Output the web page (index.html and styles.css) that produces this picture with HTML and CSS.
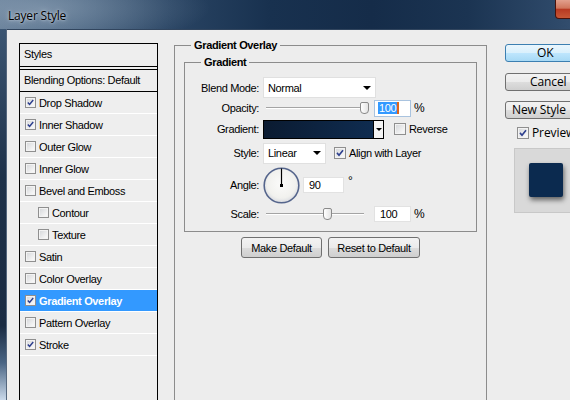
FILE: index.html
```html
<!DOCTYPE html>
<html>
<head>
<meta charset="utf-8">
<title>Layer Style</title>
<link rel="stylesheet" href="styles.css">
</head>
<body>
<div class="window">
  <div class="titlebar">
    <span class="title">Layer Style</span>
    <span class="close"></span>
  </div>
  <div class="frame">
    <div class="edge"></div>
    <div class="content">
      <div class="styles-list">
        <div class="list-head">Styles</div>
        <div class="list-blend">Blending Options: Default</div>
        <div class="list-item"><span class="cb"><svg viewBox="0 0 11 11"><path d="M2.2 5.4 L4.4 7.9 L8.8 2.4" /></svg></span>Drop Shadow</div>
        <div class="list-item"><span class="cb"><svg viewBox="0 0 11 11"><path d="M2.2 5.4 L4.4 7.9 L8.8 2.4" /></svg></span>Inner Shadow</div>
        <div class="list-item"><span class="cb"></span>Outer Glow</div>
        <div class="list-item"><span class="cb"></span>Inner Glow</div>
        <div class="list-item"><span class="cb"></span>Bevel and Emboss</div>
        <div class="list-item sub"><span class="cb"></span>Contour</div>
        <div class="list-item sub"><span class="cb"></span>Texture</div>
        <div class="list-item"><span class="cb"></span>Satin</div>
        <div class="list-item"><span class="cb"></span>Color Overlay</div>
        <div class="list-item active"><span class="cb"><svg viewBox="0 0 11 11"><path d="M2.2 5.4 L4.4 7.9 L8.8 2.4" /></svg></span>Gradient Overlay</div>
        <div class="list-item"><span class="cb"></span>Pattern Overlay</div>
        <div class="list-item"><span class="cb"><svg viewBox="0 0 11 11"><path d="M2.2 5.4 L4.4 7.9 L8.8 2.4" /></svg></span>Stroke</div>
      </div>

      <fieldset class="group outer">
        <legend>Gradient Overlay</legend>
        <fieldset class="group inner">
          <legend>Gradient</legend>
          <div class="rows">
            <div class="row r-blend">
              <span class="label">Blend Mode:</span>
              <div class="select sel-blend"><span class="sel-text">Normal</span><span class="arrow"></span></div>
            </div>
            <div class="row r-opacity">
              <span class="label">Opacity:</span>
              <div class="slider"><div class="track"></div><div class="thumb" style="left:97px"></div></div>
              <div class="field focused"><span class="sel">100</span><span class="caret"></span></div>
              <span class="unit">%</span>
            </div>
            <div class="row r-gradient">
              <span class="label">Gradient:</span>
              <div class="swatch"><div class="swatch-fill"></div><div class="swatch-arrow"><span class="arrow"></span></div></div>
              <span class="cb big"></span>
              <span class="cb-text">Reverse</span>
            </div>
            <div class="row r-style">
              <span class="label">Style:</span>
              <div class="select sel-style"><span class="sel-text">Linear</span><span class="arrow"></span></div>
              <span class="cb big align"><svg viewBox="0 0 11 11"><path d="M2.2 5.4 L4.4 7.9 L8.8 2.4" /></svg></span>
              <span class="cb-text">Align with Layer</span>
            </div>
            <div class="row r-angle">
              <span class="label">Angle:</span>
              <svg class="dial" width="37" height="37" viewBox="0 0 37 37">
                <defs>
                  <radialGradient id="dialfill" cx="50%" cy="45%" r="55%">
                    <stop offset="0%" stop-color="#fbfbfa"/>
                    <stop offset="75%" stop-color="#f1f1ee"/>
                    <stop offset="100%" stop-color="#d9dbe0"/>
                  </radialGradient>
                </defs>
                <circle cx="18.5" cy="18.5" r="17.3" fill="url(#dialfill)" stroke="#55658c" stroke-width="1.6"/>
                <line x1="18.5" y1="18.5" x2="18.5" y2="1.5" stroke="#000" stroke-width="1.2"/>
                <rect x="17" y="17" width="3" height="3" fill="#000"/>
              </svg>
              <div class="field angle-field">90</div>
              <span class="deg">°</span>
            </div>
            <div class="row r-scale">
              <span class="label">Scale:</span>
              <div class="slider"><div class="track"></div><div class="thumb" style="left:60px"></div></div>
              <div class="field">100</div>
              <span class="unit">%</span>
            </div>
          </div>
        </fieldset>
        <div class="btn-row">
          <div class="btn btn-make">Make Default</div>
          <div class="btn btn-reset">Reset to Default</div>
        </div>
      </fieldset>

      <div class="side">
        <div class="sbtn ok">OK</div>
        <div class="sbtn cancel">Cancel</div>
        <div class="sbtn newstyle">New Style</div>
        <div class="preview-row"><span class="cb big"><svg viewBox="0 0 11 11"><path d="M2.2 5.4 L4.4 7.9 L8.8 2.4" /></svg></span><span class="preview-text">Preview</span></div>
        <div class="preview-box"><div class="preview-square"></div></div>
      </div>
    </div>
  </div>
</div>
</body>
</html>
```

FILE: styles.css
```css
html, body {
  margin: 0;
  padding: 0;
}

body {
  width: 570px;
  height: 400px;
  overflow: hidden;
  background: #ededed;
  font-family: "Liberation Sans", Arial, sans-serif;
  font-size: 11px;
  letter-spacing: -0.35px;
  color: #000;
}

.window {
  width: 600px;
  height: 400px;
  display: flex;
  flex-direction: column;
}

/* ---------- title bar ---------- */
.titlebar {
  height: 29px;
  flex: none;
  display: flex;
  align-items: flex-start;
  background:
    radial-gradient(ellipse 170px 40px at 40px 8px, rgba(160,178,196,0.5), rgba(160,178,196,0) 100%),
    linear-gradient(90deg, #5f7893 0%, #4a6582 12%, #2a4564 28%, #18314f 45%, #152c49 62%, #1b3452 78%, #2d4868 92%, #3a5575 100%);
}

.title {
  font-family: "Open Sans", "Noto Sans", sans-serif;
  font-size: 12px;
  letter-spacing: -0.2px;
  line-height: 17px;
  padding: 7px 0 0 8px;
  color: #000;
  text-shadow: 0 0 5px rgba(220,230,240,0.9), 0 0 2px rgba(220,230,240,0.7);
}

.close {
  margin-left: auto;
  width: 43px;
  height: 18px;
  border: 1px solid #4a120a;
  border-top: none;
  border-radius: 0 0 4px 4px;
  background: linear-gradient(#e2a08d, #d0765c 45%, #b83a22 52%, #c85736 100%);
}

/* ---------- frame ---------- */
.frame {
  flex: 1;
  display: flex;
  min-height: 0;
}

.edge {
  width: 6px;
  flex: none;
  border-right: 1px solid #55677e;
  background: linear-gradient(#3b5572, #1e3149 40%, #1a2b42 80%, #4a6584 90%, #cad9ea 100%);
}

.content {
  flex: 1;
  display: flex;
  align-items: flex-start;
  border-top: 1px solid #31455e;
  background: #ededed;
  padding-left: 12px;
  min-width: 0;
}

/* ---------- styles list ---------- */
.styles-list {
  width: 139px;
  height: 400px;
  flex: none;
  box-sizing: border-box;
  margin-top: 13px;
  border: 1px solid #000;
  background: #eeeeee;
}

.list-head {
  height: 22px;
  line-height: 21px;
  padding-left: 4px;
  border-bottom: 1px solid #000;
}

.list-blend {
  height: 21px;
  line-height: 21px;
  padding-left: 4px;
  margin-top: 2px;
  border-top: 1px solid #000;
  border-bottom: 1px solid #000;
}

.list-item {
  height: 21px;
  display: flex;
  align-items: center;
  padding-left: 5px;
  border-bottom: 1px solid #ffffff;
}

.list-item.sub {
  padding-left: 18px;
}

.list-item.active {
  background: #3399ff;
  color: #fff;
  font-weight: bold;
}

/* ---------- checkboxes ---------- */
.cb {
  width: 11px;
  height: 11px;
  flex: none;
  box-sizing: border-box;
  border: 1px solid #8f8f8f;
  background: linear-gradient(135deg, #d3d5d8, #f6f6f6 80%);
  box-shadow: inset 0 0 0 1px #f3f3f3;
  margin-right: 3px;
  display: flex;
}

.cb svg {
  width: 100%;
  height: 100%;
}

.cb path {
  fill: none;
  stroke: #2d3f8e;
  stroke-width: 1.8;
}

.cb.big {
  width: 12px;
  height: 12px;
}

/* ---------- fieldsets ---------- */
.group {
  margin: 0;
  padding: 0;
  min-width: 0;
  box-sizing: border-box;
  border: 1px solid #8c8c8c;
}

.group legend {
  font-weight: bold;
  line-height: 13px;
  padding: 0 3px;
  margin-left: 16px;
}

.outer {
  width: 313px;
  height: 420px;
  flex: none;
  margin: 9px 0 0 16px;
}

.inner {
  margin: 4px 9px 0;
  padding-bottom: 7px;
}

.rows {
  margin-top: 8px;
}

.row {
  display: flex;
  align-items: center;
}

.label {
  width: 74px;
  flex: none;
  text-align: right;
  margin-right: 4px;
}

.r-blend { height: 21px; }
.r-opacity { height: 20px; }
.r-gradient { height: 22px; }
.r-style { height: 26px; }
.r-angle { height: 38px; }
.r-scale { height: 20px; }

/* select boxes */
.select {
  box-sizing: border-box;
  height: 21px;
  background: #fff;
  border: 1px solid #e0e0e0;
  display: flex;
  align-items: center;
  padding: 0 4px 0 4px;
}

.sel-text {
  flex: 1;
}

.sel-blend { width: 113px; }
.sel-style { width: 63px; }

.arrow {
  width: 0;
  height: 0;
  border-left: 4px solid transparent;
  border-right: 4px solid transparent;
  border-top: 4px solid #000;
}

/* sliders */
.slider {
  position: relative;
  width: 107px;
  height: 20px;
  margin-right: 4px;
  display: flex;
  align-items: center;
}

.track {
  width: 98px;
  height: 1px;
  margin-left: 3px;
  border-top: 1px solid #a4a4a4;
  background: #fff;
}

.thumb {
  position: absolute;
  top: 4px;
  width: 9px;
  height: 12px;
  box-sizing: border-box;
  border: 1px solid #8a8a8a;
  border-radius: 2px 2px 4px 4px;
  background: linear-gradient(90deg, #ffffff, #e4e4e4);
}

/* text fields */
.field {
  box-sizing: border-box;
  width: 37px;
  height: 16px;
  background: #fff;
  border: 1px solid #e2e2e2;
  padding-left: 5px;
  display: flex;
  align-items: center;
}

.field.focused {
  height: 17px;
  border-color: #a9c3df;
  padding-left: 3px;
}

.sel {
  background: #3399ff;
  color: #fff;
  padding: 0 1px;
  line-height: 12px;
}

.caret {
  width: 2px;
  height: 12px;
  background: #e0641a;
}

.unit {
  margin-left: 3px;
  font-size: 12px;
}

/* gradient swatch */
.swatch {
  box-sizing: border-box;
  width: 121px;
  height: 19px;
  border: 1px solid #000;
  display: flex;
}

.swatch-fill {
  flex: 1;
  background: linear-gradient(90deg, #0b1b31, #0f2c50);
  border-right: 1px solid #000;
}

.swatch-arrow {
  width: 9px;
  background: #f4f4f4;
  display: flex;
  align-items: center;
  justify-content: center;
}

.swatch-arrow .arrow {
  border-left-width: 3px;
  border-right-width: 3px;
  border-top-width: 3px;
}

.r-gradient .cb {
  margin-left: 10px;
}

.r-style .cb {
  margin-left: 8px;
}

/* angle */
.dial {
  flex: none;
  display: block;
}

.angle-field {
  width: 41px;
  margin-left: 3px;
}

.deg {
  margin-left: 4px;
  font-size: 12px;
  align-self: flex-start;
  margin-top: 8px;
}

/* buttons under group */
.btn-row {
  display: flex;
  justify-content: center;
  gap: 6px;
  margin-top: 5px;
}

.btn {
  box-sizing: border-box;
  height: 21px;
  border: 1px solid #707070;
  border-radius: 3px;
  background: linear-gradient(#f3f3f3, #ebebeb 50%, #dddddd 51%, #cfcfcf);
  display: flex;
  align-items: center;
  justify-content: center;
}

.btn-make { width: 81px; }
.btn-reset { width: 92px; }

/* ---------- right side ---------- */
.side {
  width: 90px;
  flex: none;
  margin: 14px 0 0 18px;
  font-family: "Open Sans", "Noto Sans", sans-serif;
  font-size: 12px;
  letter-spacing: -0.1px;
}

.sbtn {
  box-sizing: border-box;
  width: 80px;
  height: 18px;
  border: 1px solid #707070;
  border-radius: 3px;
  background: linear-gradient(#f2f2f2, #ebebeb 50%, #dddddd 51%, #cfcfcf);
  line-height: 15px;
  padding-left: 6px;
  white-space: nowrap;
}

.sbtn.ok {
  border-color: #3c7fb1;
  background: linear-gradient(#eaf6fd, #d9f0fc 50%, #bee6fd 51%, #a7d9f5);
  padding-left: 31px;
}

.sbtn.cancel {
  margin-top: 11px;
  padding-left: 24px;
}

.sbtn.newstyle {
  margin-top: 10px;
}

.preview-row {
  display: flex;
  align-items: center;
  height: 12px;
  margin: 8px 0 0 12px;
}

.preview-row .cb {
  margin-right: 3px;
}

.preview-text {
  line-height: 12px;
}

.preview-box {
  box-sizing: border-box;
  width: 70px;
  height: 65px;
  margin: 9px 0 0 9px;
  border: 1px solid #c8c8c8;
  background: #d9d9d9;
  padding: 14px 0 0 14px;
}

.preview-square {
  width: 34px;
  height: 34px;
  border-radius: 2px;
  background: #0b2a4f;
  box-shadow: 1px 3px 5px rgba(0,0,0,0.55);
}
```
